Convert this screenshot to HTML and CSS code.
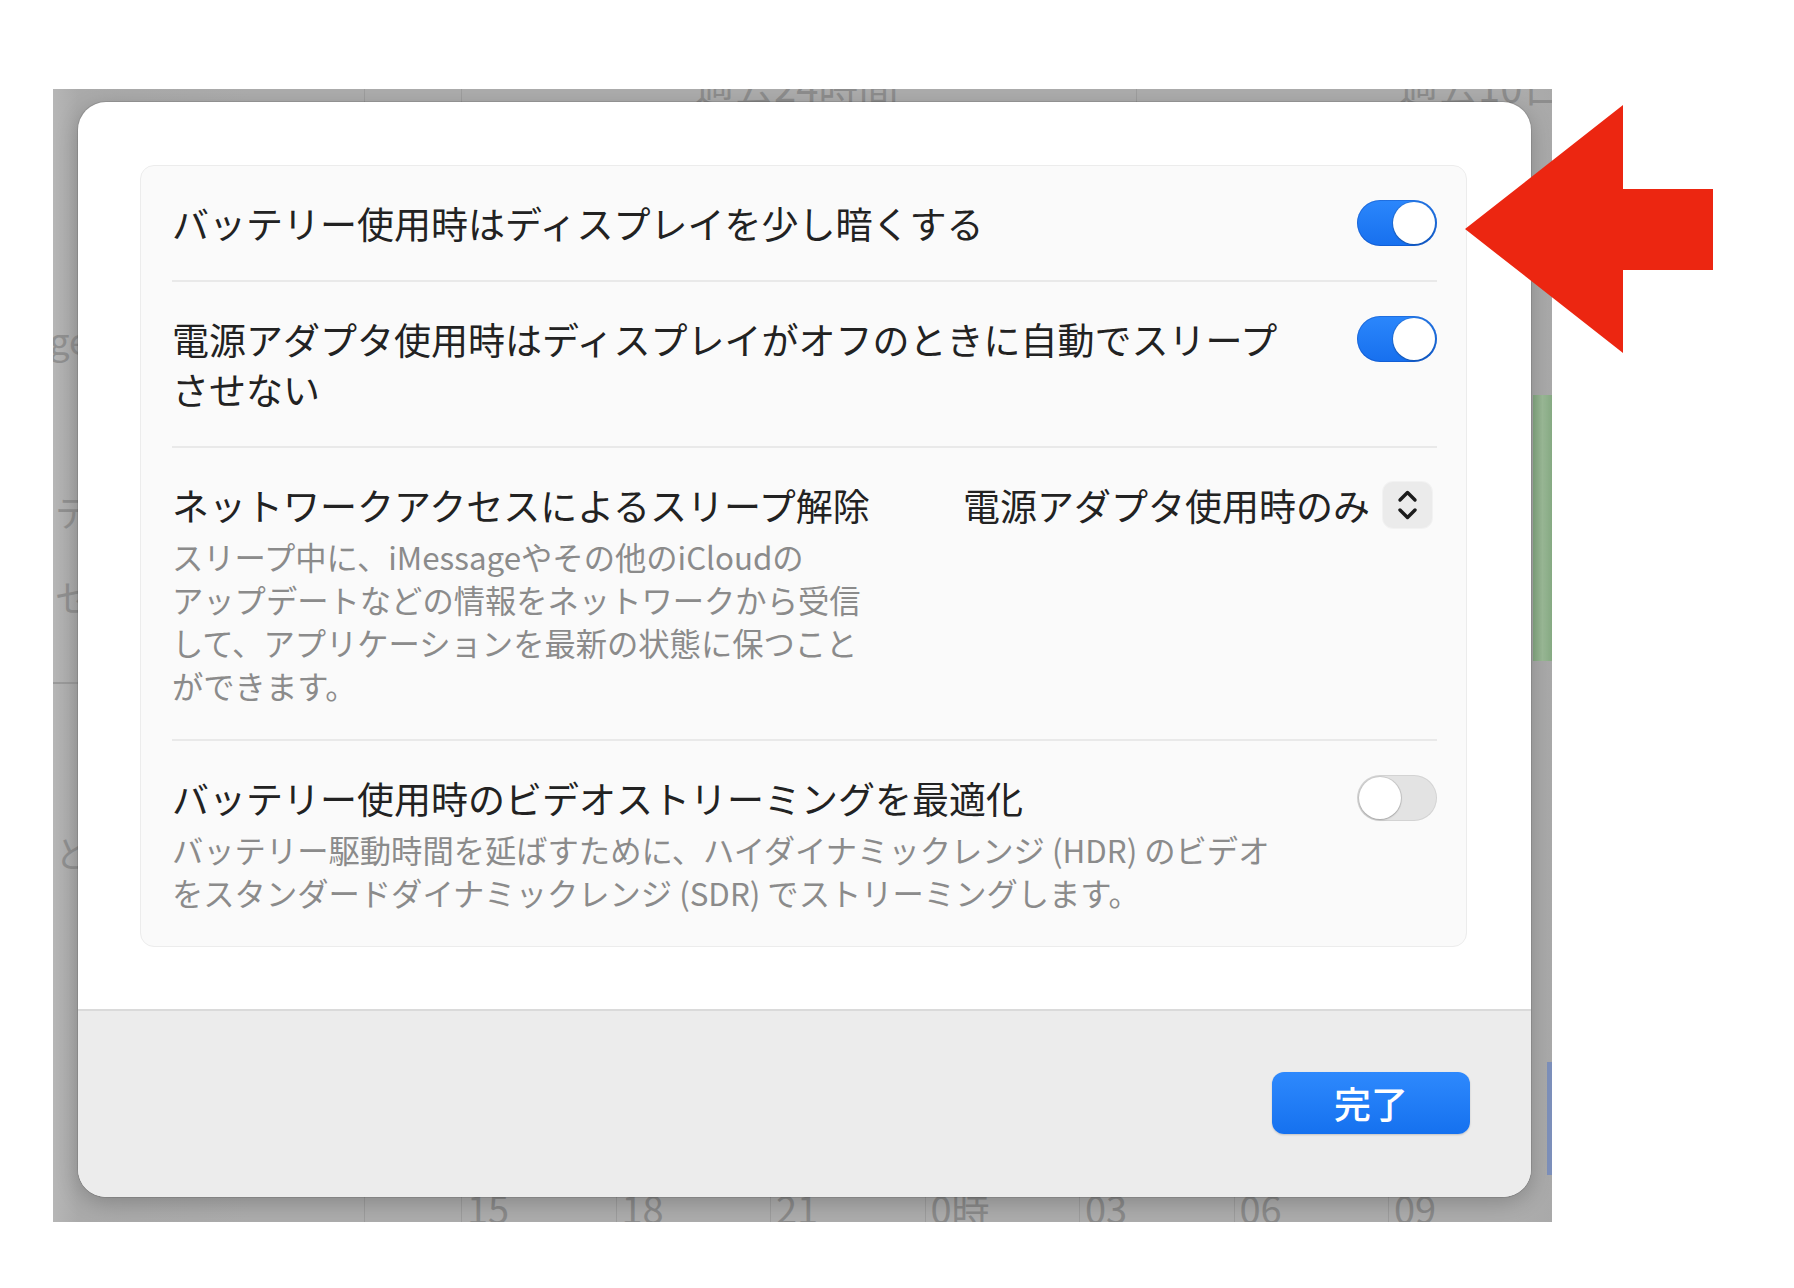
FILE: index.html
```html
<!DOCTYPE html>
<html lang="ja">
<head>
<meta charset="utf-8">
<title>バッテリー設定</title>
<link rel="stylesheet" href="styles.css">
</head>
<body>
<div class="backdrop">
  <div class="bg-label bg-top-a">過去24時間</div>
  <div class="bg-label bg-top-b">過去10日</div>
  <div class="bg-vline bg-v1"></div>
  <div class="bg-vline bg-v2"></div>
  <div class="bg-vline bg-v3"></div>
  <div class="bg-side bg-s1">age</div>
  <div class="bg-side bg-s2">テ</div>
  <div class="bg-side bg-s3">セ</div>
  <div class="bg-side bg-s4">と</div>
  <div class="bg-hline"></div>
  <div class="bg-green"></div>
  <div class="bg-blue"></div>
  <div class="axis">
    <span class="axis-first"></span>
    <span>15</span><span>18</span><span>21</span><span>0時</span><span>03</span><span>06</span><span>09</span>
  </div>

  <div class="dialog">
    <div class="content">
      <div class="card">
        <div class="row">
          <div class="text">
            <div class="title">バッテリー使用時はディスプレイを少し暗くする</div>
          </div>
          <span class="toggle on"></span>
        </div>
        <div class="row">
          <div class="text">
            <div class="title">電源アダプタ使用時はディスプレイがオフのときに自動でスリープ<br>させない</div>
          </div>
          <span class="toggle on"></span>
        </div>
        <div class="row">
          <div class="text">
            <div class="title">ネットワークアクセスによるスリープ解除</div>
            <div class="desc">スリープ中に、iMessageやその他のiCloudの<br>アップデートなどの情報をネットワークから受信<br>して、アプリケーションを最新の状態に保つこと<br>ができます。</div>
          </div>
          <div class="popup">
            <span>電源アダプタ使用時のみ</span>
            <span class="stepper">
              <svg width="49" height="46" viewBox="0 0 49 46"><path d="M17 18 L24.5 10.5 L32 18" fill="none" stroke="#1c1c1c" stroke-width="3.4" stroke-linecap="round" stroke-linejoin="round"/><path d="M17 28 L24.5 35.5 L32 28" fill="none" stroke="#1c1c1c" stroke-width="3.4" stroke-linecap="round" stroke-linejoin="round"/></svg>
            </span>
          </div>
        </div>
        <div class="row">
          <div class="text">
            <div class="title">バッテリー使用時のビデオストリーミングを最適化</div>
            <div class="desc">バッテリー駆動時間を延ばすために、ハイダイナミックレンジ (HDR) のビデオ<br>をスタンダードダイナミックレンジ (SDR) でストリーミングします。</div>
          </div>
          <span class="toggle"></span>
        </div>
      </div>
    </div>
    <div class="footer">
      <button class="btn">完了</button>
    </div>
  </div>
</div>
<svg class="arrow" width="248" height="248" viewBox="0 0 248 248"><polygon points="0,124 158,0 158,84 248,84 248,165 158,165 158,248" fill="#ec2611"/></svg>
</body>
</html>
```
FILE: styles.css
```css
html, body {
  margin: 0;
  padding: 0;
}
body {
  position: relative;
  width: 1794px;
  height: 1288px;
  overflow: hidden;
  background: #ffffff;
  font-family: "Noto Sans CJK JP", "Noto Sans", sans-serif;
  color: #262626;
}

.backdrop {
  position: relative;
  margin: 89px 0 0 53px;
  width: 1499px;
  height: 1133px;
  box-sizing: border-box;
  padding: 13px 0 0 25px;
  background: linear-gradient(90deg, #b6b6b6 0px, #aaaaaa 25px, #adadad 200px, #adadad 1460px, #a9a9a9 100%);
  overflow: hidden;
}

/* fragments of the window behind the sheet */
.bg-label {
  position: absolute;
  font-size: 40px;
  line-height: 40px;
  color: #8d8d8d;
  white-space: nowrap;
}
.bg-top-a { left: 641px; top: -24px; }
.bg-top-b { left: 1345px; top: -24px; }
.bg-vline {
  position: absolute;
  top: 0;
  width: 1px;
  height: 14px;
  background: #9e9e9e;
}
.bg-v1 { left: 311px; }
.bg-v2 { left: 408px; }
.bg-v3 { left: 1083px; }
.bg-side {
  position: absolute;
  left: 2px;
  font-size: 36px;
  line-height: 40px;
  color: #909090;
}
.bg-s1 { left: -24px; top: 230px; }
.bg-s2 { top: 402px; }
.bg-s3 { top: 487px; }
.bg-s4 { top: 743px; }
.bg-hline {
  position: absolute;
  left: 0;
  top: 593px;
  width: 30px;
  height: 2px;
  background: #9a9a9a;
}
.bg-green {
  position: absolute;
  left: 1480px;
  top: 306px;
  width: 19px;
  height: 266px;
  background: linear-gradient(90deg, #86aa83, #9cbb98 50%, #86aa83);
}
.bg-blue {
  position: absolute;
  left: 1494px;
  top: 973px;
  width: 6px;
  height: 113px;
  background: #7d90bb;
}
.axis {
  position: absolute;
  left: 311px;
  top: 1096px;
  display: flex;
  font-size: 38px;
  line-height: 46px;
  color: #8a8a8a;
}
.axis span {
  width: 154.5px;
  box-sizing: border-box;
  padding-left: 5px;
  border-left: 1px solid #9d9d9d;
}
.axis .axis-first {
  width: 97px;
}

/* sheet */
.dialog {
  position: relative;
  z-index: 1;
  width: 1453px;
  height: 1095px;
  background: #ffffff;
  border-radius: 28px;
  overflow: hidden;
  display: flex;
  flex-direction: column;
  box-shadow: 0 0 0 1px rgba(0, 0, 0, 0.1), 0 6px 22px rgba(0, 0, 0, 0.22);
}
.content {
  padding: 63px 64px 62px 62px;
}
.card {
  background: #fafafa;
  border: 1px solid #ececec;
  border-radius: 14px;
  padding: 0 29px 0 31px;
}
.row {
  display: flex;
  align-items: flex-start;
  gap: 40px;
  padding: 32px 0;
}
.row + .row {
  border-top: 2px solid #e9e9e9;
}
.text {
  flex: 1;
  min-width: 0;
}
.title {
  font-size: 37px;
  line-height: 50px;
  font-weight: 400;
  color: #222222;
  white-space: nowrap;
}
.desc {
  margin-top: 5px;
  font-size: 31.3px;
  line-height: 43px;
  color: #8b8b8b;
  white-space: nowrap;
}

.toggle {
  flex: none;
  position: relative;
  width: 80px;
  height: 46px;
  margin-top: 2px;
  border-radius: 23px;
  background: #e3e3e3;
  box-shadow: inset 0 0 0 1px rgba(0, 0, 0, 0.07);
}
.toggle::after {
  content: "";
  position: absolute;
  top: 2px;
  left: 2px;
  width: 42px;
  height: 42px;
  border-radius: 50%;
  background: #ffffff;
  box-shadow: 0 0 0 1px rgba(0, 0, 0, 0.1), 0 1px 2px rgba(0, 0, 0, 0.2);
}
.toggle.on {
  background: linear-gradient(#2b87fc, #1770ee);
  box-shadow: inset 0 0 0 1px rgba(0, 40, 140, 0.25);
}
.toggle.on::after {
  left: 36px;
}

.popup {
  flex: none;
  display: flex;
  align-items: center;
  gap: 13px;
  margin-right: 5px;
  font-size: 37px;
  line-height: 50px;
  font-weight: 400;
  color: #222222;
}
.stepper {
  display: flex;
  width: 49px;
  height: 46px;
  border-radius: 10px;
  background: #ebebeb;
  box-shadow: 0 0 0 1px rgba(0, 0, 0, 0.03);
}

.footer {
  flex: 1;
  display: flex;
  justify-content: flex-end;
  align-items: flex-start;
  padding: 61px 61px 0 0;
  background: #ececec;
  border-top: 2px solid #dadada;
}
.btn {
  width: 198px;
  height: 62px;
  border: none;
  border-radius: 12px;
  background: linear-gradient(#2e89fd, #1571ef);
  color: #ffffff;
  font-family: "Noto Sans CJK JP", "Noto Sans", sans-serif;
  font-size: 37px;
  font-weight: 500;
  line-height: 62px;
  padding: 0;
  box-shadow: 0 1px 2px rgba(0, 0, 0, 0.18);
}

.arrow {
  position: absolute;
  z-index: 5;
  left: 1465px;
  top: 105px;
  display: block;
}
```
